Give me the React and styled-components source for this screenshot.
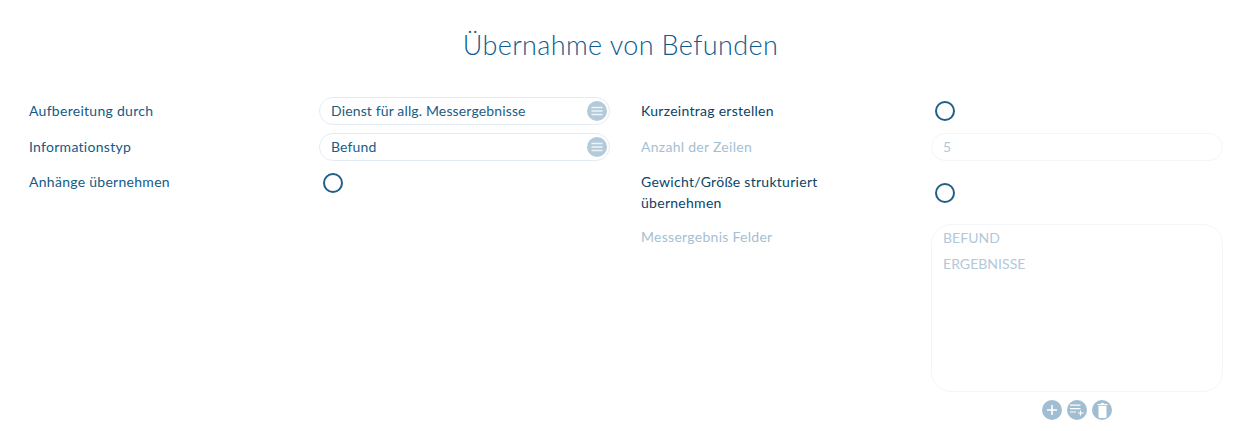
import styled, { createGlobalStyle } from "styled-components"

const GlobalStyle = createGlobalStyle`
  html, body {
    margin: 0;
    background: #fff;
    font-family: "Lato", "Liberation Sans", sans-serif;
  }
`

const Page = styled.div`
  width: 1249px;
  height: 431px;
  box-sizing: border-box;
  padding: 0 26px 0 29px;
  overflow: hidden;
`

const Title = styled.h1`
  margin: 0;
  padding: 28px 11px 0 0;
  height: 97px;
  box-sizing: border-box;
  text-align: center;
  font-size: 27px;
  line-height: 34px;
  font-weight: 300;
  letter-spacing: 0.38px;
  color: #0f5c8e;
`

const Columns = styled.div`
  display: grid;
  grid-template-columns: 581px 582px;
  column-gap: 31px;
  align-items: start;
`

const Column = styled.div`
  display: flex;
  flex-direction: column;
  gap: 8px;
`

const Row = styled.div`
  display: grid;
  grid-template-columns: 290px 1fr;
  align-items: ${(p) => (p.$center ? "center" : "start")};
  min-height: 28px;
`

const Label = styled.label`
  font-size: 14px;
  line-height: ${(p) => (p.$tight ? "26px" : "28px")};
  letter-spacing: 0.28px;
  color: ${(p) => (p.$disabled ? "#a5bfd2" : p.$strong ? "#0a4468" : "#145a85")};
`

const WrappedLabel = styled(Label)`
  display: block;
  max-width: 220px;
  padding: 2px 0 3px;
  line-height: 21px;
`

const Field = styled.div`
  position: relative;
  height: 28px;
  box-sizing: border-box;
  padding: 0 30px 0 11px;
  border: 1px solid ${(p) => (p.$disabled ? "#f2f6f9" : "#e4ecf3")};
  border-radius: 14px;
  font-size: 14px;
  line-height: 26px;
  letter-spacing: 0.14px;
  color: ${(p) => (p.$disabled ? "#b3c8d8" : "#1b5c85")};
`

const MenuButton = styled.span`
  position: absolute;
  top: 3px;
  right: 2px;
  width: 20px;
  height: 20px;
  border-radius: 50%;
  background: #b3cadb;
  display: flex;
  align-items: center;
  justify-content: center;
`

const Toggle = styled.span`
  display: block;
  width: 20px;
  height: 20px;
  margin: ${(p) => (p.$top ? "4px 0 0 4px" : "0 0 0 4px")};
  box-sizing: border-box;
  border: 2px solid #1f5f88;
  border-radius: 50%;
`

const ListBox = styled.div`
  height: 168px;
  box-sizing: border-box;
  padding: 0 11px;
  border: 1px solid #f2f6f9;
  border-radius: 20px;
  font-size: 14px;
  line-height: 26px;
  letter-spacing: 0.05px;
  color: #b3c8d8;
`

const ListActions = styled.div`
  display: flex;
  justify-content: center;
  gap: 5px;
  margin-top: 8px;
`

const ActionButton = styled.span`
  width: 20px;
  height: 20px;
  border-radius: 50%;
  background: #a0bdd2;
  display: flex;
  align-items: center;
  justify-content: center;
`

const MenuIcon = () => (
  <svg width="12" height="12" viewBox="0 0 12 12" fill="none" stroke="#eef3f7" strokeWidth="1.5">
    <path d="M0.5 2.6h11M0.5 6h11M0.5 9.4h11" />
  </svg>
)

const PlusIcon = () => (
  <svg width="12" height="12" viewBox="0 0 12 12" fill="none" stroke="#fff" strokeWidth="1.6">
    <path d="M6 1v10M1 6h10" />
  </svg>
)

const ListAddIcon = () => (
  <svg width="14" height="12" viewBox="0 0 14 12" fill="none" stroke="#fff" strokeWidth="1.2">
    <path d="M0 1.2h10.5M0 4.6h10.5M0 8h6M10.5 6.5v5M8 9h5.5" />
  </svg>
)

const TrashIcon = () => (
  <svg width="11" height="15" viewBox="0 0 11 15" fill="#fff">
    <path d="M3.8 0h3.4v1h3.3v1.3H0.5V1h3.3z" />
    <path d="M1.5 3h8v10.8a1.2 1.2 0 0 1-1.2 1.2H2.7a1.2 1.2 0 0 1-1.2-1.2z" />
  </svg>
)

export default function App() {
  return (
    <>
      <GlobalStyle />
      <Page>
        <Title>Übernahme von Befunden</Title>
        <Columns>
          <Column>
            <Row>
              <Label>Aufbereitung durch</Label>
              <Field>
                Dienst für allg. Messergebnisse
                <MenuButton><MenuIcon /></MenuButton>
              </Field>
            </Row>
            <Row>
              <Label>Informationstyp</Label>
              <Field>
                Befund
                <MenuButton><MenuIcon /></MenuButton>
              </Field>
            </Row>
            <Row>
              <Label $tight>Anhänge übernehmen</Label>
              <Toggle $top />
            </Row>
          </Column>
          <Column>
            <Row $center>
              <Label $strong>Kurzeintrag erstellen</Label>
              <Toggle />
            </Row>
            <Row>
              <Label $disabled>Anzahl der Zeilen</Label>
              <Field $disabled>5</Field>
            </Row>
            <Row $center>
              <WrappedLabel $strong>Gewicht/Größe strukturiert übernehmen</WrappedLabel>
              <Toggle />
            </Row>
            <Row>
              <Label $disabled $tight>Messergebnis Felder</Label>
              <div>
                <ListBox>
                  <div>BEFUND</div>
                  <div>ERGEBNISSE</div>
                </ListBox>
                <ListActions>
                  <ActionButton><PlusIcon /></ActionButton>
                  <ActionButton><ListAddIcon /></ActionButton>
                  <ActionButton><TrashIcon /></ActionButton>
                </ListActions>
              </div>
            </Row>
          </Column>
        </Columns>
      </Page>
    </>
  )
}
